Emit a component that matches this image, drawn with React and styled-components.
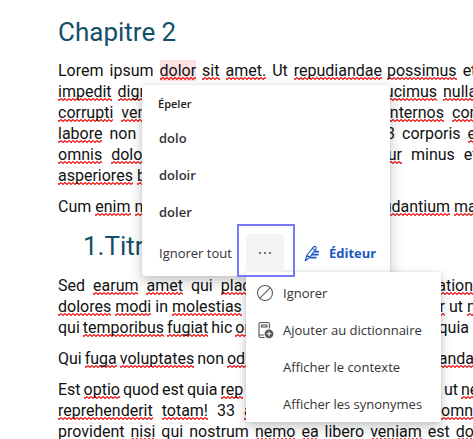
import React from "react";
import styled, { createGlobalStyle, css } from "styled-components";

const GlobalStyle = createGlobalStyle`
  *, *::before, *::after { box-sizing: border-box; }
  body { margin: 0; background: #fff; }
`;

const docFont = `Roboto, "Liberation Sans", sans-serif`;
const uiFont = `"Open Sans", "Noto Sans", sans-serif`;
const wave = `url("data:image/svg+xml,%3Csvg xmlns='http://www.w3.org/2000/svg' width='4' height='3'%3E%3Cpath d='M-1 0L1 2L3 0L5 2' transform='translate(0 .5)' fill='none' stroke='%23ee1111' stroke-width='1.1'/%3E%3C/svg%3E")`;

const Page = styled.main`
  position: relative;
  height: 100vh;
  overflow: hidden;
  background: #fff;
`;

const Document = styled.article`
  padding: 14px 0 0 58px;
  font: 16px/21px ${docFont};
  color: #111;
`;

const Heading = styled.h1`
  margin: 0 0 10px;
  font: 400 26px/36px ${docFont};
  color: #134f69;
`;

const SubHeading = styled.h2`
  display: flex;
  margin: 0 0 10px;
  padding-left: 25px;
  font: 400 26px/38px ${docFont};
  color: #134f69;
`;

const Paragraph = styled.p`
  margin: 0 0 10px;
`;

const Line = styled.span`
  display: flex;
  gap: ${(p) => p.$gap}px;
  white-space: nowrap;
`;

const Lead = styled.span`
  display: flex;
  flex: none;
  gap: ${(p) => p.$gap}px;
  width: ${(p) => (p.$reach ? `${p.$reach}px` : "auto")};
`;

const Word = styled.span`
  flex: none;
  margin-left: ${(p) => (p.$last ? "auto" : "0")};
  ${(p) => p.$wrong && css`background: ${wave} 0 17px / 4px 3px repeat-x;`}
  ${(p) => p.$active && css`background-color: #fde0e2;`}
`;

const Popup = styled.section`
  position: absolute;
  top: 85px;
  left: 142px;
  width: 248px;
  padding: 8px 0 2px;
  background: #fff;
  border-radius: 3px;
  box-shadow: 0 5px 14px rgba(0, 0, 0, 0.24), 0 0 3px rgba(0, 0, 0, 0.08);
  font: 13px/20px ${uiFont};
  color: #333;
`;

const PopupTitle = styled.h3`
  margin: 0 0 4px;
  padding-left: 16px;
  font: 600 11px/22px ${uiFont};
  color: #222;
`;

const Suggestion = styled.button`
  display: block;
  width: 100%;
  height: 37px;
  padding: 0 0 0 17px;
  border: 0;
  background: none;
  text-align: left;
  font: 600 13px/20px ${uiFont};
  color: #333;
`;

const ActionBar = styled.div`
  display: flex;
  align-items: center;
  height: 42px;
  margin-top: 2px;
`;

const TextButton = styled.button`
  width: 87px;
  padding: 0 0 0 17px;
  border: 0;
  background: none;
  font: inherit;
  color: inherit;
  text-align: left;
  white-space: nowrap;
`;

const MoreButton = styled.button`
  position: relative;
  z-index: 2;
  display: grid;
  place-items: center;
  width: 38px;
  height: 38px;
  margin-left: 17px;
  border: 0;
  border-radius: 4px;
  background: #f4f4f4;
  color: #555;

  &::after {
    content: "";
    position: absolute;
    inset: -10px -11px -5px -9px;
    border: 2px solid #7878fb;
  }
`;

const EditorButton = styled.button`
  display: flex;
  align-items: center;
  gap: 9px;
  margin-left: 20px;
  padding: 0;
  border: 0;
  background: none;
  font: 700 13px/20px ${uiFont};
  color: #185abd;
`;

const Menu = styled.div`
  position: absolute;
  z-index: 1;
  top: 187px;
  left: 104px;
  width: 195px;
  padding: 2px 0 0;
  background: #fff;
  border-radius: 2px;
  box-shadow: 0 5px 12px rgba(0, 0, 0, 0.22), 0 0 3px rgba(0, 0, 0, 0.12);
`;

const MenuItem = styled.button`
  display: grid;
  grid-template-columns: 18px 1fr;
  column-gap: 9px;
  align-items: center;
  width: 100%;
  height: 37px;
  padding: 0 0 0 10px;
  border: 0;
  background: none;
  font: inherit;
  color: inherit;
  text-align: left;
  white-space: nowrap;
`;

const Label = styled.span`
  grid-column: 2;
`;

const DotsIcon = () => (
  <svg width="14" height="4" viewBox="0 0 14 4" fill="currentColor" aria-hidden="true">
    <circle cx="2" cy="2" r="1.1" />
    <circle cx="7" cy="2" r="1.1" />
    <circle cx="12" cy="2" r="1.1" />
  </svg>
);

const EditorIcon = () => (
  <svg width="16" height="17" viewBox="0 0 16 17" fill="none" stroke="currentColor" aria-hidden="true">
    <path d="M1 16L3 10.2L9.3 2.2Q11 .5 12 2.2Q12.6 3.3 11.6 4.6L5.6 12.4L1 16M3 10.2L5.6 12.4M8.4 3.4L11 5.4" strokeWidth="1.1" />
    <path d="M10 6.6H15M7.8 9.6H14.5M5.8 12.6H12.5" strokeWidth="1.7" />
  </svg>
);

const IgnoreIcon = () => (
  <svg width="18" height="18" viewBox="0 0 18 18" fill="none" stroke="#5c5c5c" strokeWidth="1.1" aria-hidden="true">
    <circle cx="9" cy="9" r="7.5" />
    <path d="M3.7 14.3L14.3 3.7" />
  </svg>
);

const DictionaryIcon = () => (
  <svg width="18" height="18" viewBox="0 0 18 18" fill="none" stroke="#555" strokeWidth="1.1" aria-hidden="true">
    <path d="M8.5 16.5H4.5Q3 16.5 3 15V3Q3 1.5 4.5 1.5H12Q13.5 1.5 13.5 3V7.5M3 14H8" />
    <rect x="5.5" y="4" width="5.5" height="2" />
    <circle cx="13" cy="12.8" r="4.4" fill="#555" stroke="none" />
    <path d="M13 10.4V15.2M10.6 12.8H15.4" stroke="#fff" />
  </svg>
);

/* A leading "~" marks a misspelt word, "=" the misspelt word being corrected. */
const toWord = (token, index, last) => (
  <Word key={index} $wrong={/^[~=]/.test(token)} $active={token[0] === "="} $last={last}>
    {token.replace(/^[~=]/, "")}
  </Word>
);

const paragraphs = [
  [
    { gap: 6, lead: "Lorem ipsum =dolor ~sit ~amet. Ut ~repudiandae", reach: 323, tail: "~possimus et" },
    { gap: 6, lead: "~impedit ~dign ~ducimus", reach: 379, tail: "~nulla" },
    { gap: 8, lead: "~corrupti ~veniam ~internos", reach: 386, tail: "~consequatur" },
    { gap: 7, lead: "~labore non 33", reach: 337, tail: "corporis ~et" },
    { gap: 9, lead: "~omnis ~dolor ~quatur", reach: 344, tail: "minus et" },
    { gap: 4, lead: "~asperiores ~beatae" },
  ],
  [{ gap: 4, lead: "Cum ~enim ~nisi ~laudantium", reach: 392, tail: "~maiores" }],
  [
    { gap: 8, lead: "Sed ~earum ~amet qui ~placeat ~ration", reach: 415, tail: "" },
    { gap: 4, lead: "~dolores ~modi in ~molestias ~dolor", reach: 387, tail: "ut ~nemo" },
    { gap: 3, lead: "qui ~temporibus ~fugiat hic ~omnis quia", reach: 411, tail: "" },
  ],
  [{ gap: 3, lead: "Qui ~fuga ~voluptates non ~odio ~repudianda", reach: 416, tail: "" }],
  [
    { gap: 3, lead: "Est ~optio quod est quia ~rep ut", reach: 400, tail: "~nemo" },
    { gap: 9, lead: "~reprehenderit ~totam! 33 ~aut ~omn", reach: 415, tail: "" },
    { gap: 6, lead: "provident ~nisi qui nostrum ~nemo ~ea libero ~veniam est ~dolor" },
  ],
];

const TextLine = ({ gap, lead, reach, tail }) => {
  const words = lead.split(" ");
  return (
    <Line $gap={gap}>
      <Lead $gap={gap} $reach={reach}>
        {words.map((w, i) => toWord(w, i, Boolean(reach) && i === words.length - 1))}
      </Lead>
      {tail && tail.split(" ").map((w, i) => toWord(w, i, false))}
    </Line>
  );
};

const TextBlock = ({ lines }) => (
  <Paragraph>
    {lines.map((line, i) => (
      <TextLine key={i} {...line} />
    ))}
  </Paragraph>
);

export default function App() {
  return (
    <Page>
      <GlobalStyle />
      <Document lang="la">
        <Heading>Chapitre 2</Heading>
        {paragraphs.slice(0, 2).map((lines, i) => (
          <TextBlock key={i} lines={lines} />
        ))}
        <SubHeading>
          <span>1.</span>
          <span>Titre</span>
        </SubHeading>
        {paragraphs.slice(2).map((lines, i) => (
          <TextBlock key={i} lines={lines} />
        ))}
      </Document>
      <Popup aria-label="Épeler">
        <PopupTitle>Épeler</PopupTitle>
        {["dolo", "doloir", "doler"].map((word) => (
          <Suggestion key={word} type="button">{word}</Suggestion>
        ))}
        <ActionBar>
          <TextButton type="button">Ignorer tout</TextButton>
          <MoreButton type="button" aria-label="Plus d’options" aria-expanded="true">
            <DotsIcon />
          </MoreButton>
          <EditorButton type="button">
            <EditorIcon />
            Éditeur
          </EditorButton>
        </ActionBar>
        <Menu role="menu">
          <MenuItem type="button" role="menuitem"><IgnoreIcon /><Label>Ignorer</Label></MenuItem>
          <MenuItem type="button" role="menuitem"><DictionaryIcon /><Label>Ajouter au dictionnaire</Label></MenuItem>
          <MenuItem type="button" role="menuitem"><Label>Afficher le contexte</Label></MenuItem>
          <MenuItem type="button" role="menuitem"><Label>Afficher les synonymes</Label></MenuItem>
        </Menu>
      </Popup>
    </Page>
  );
}
